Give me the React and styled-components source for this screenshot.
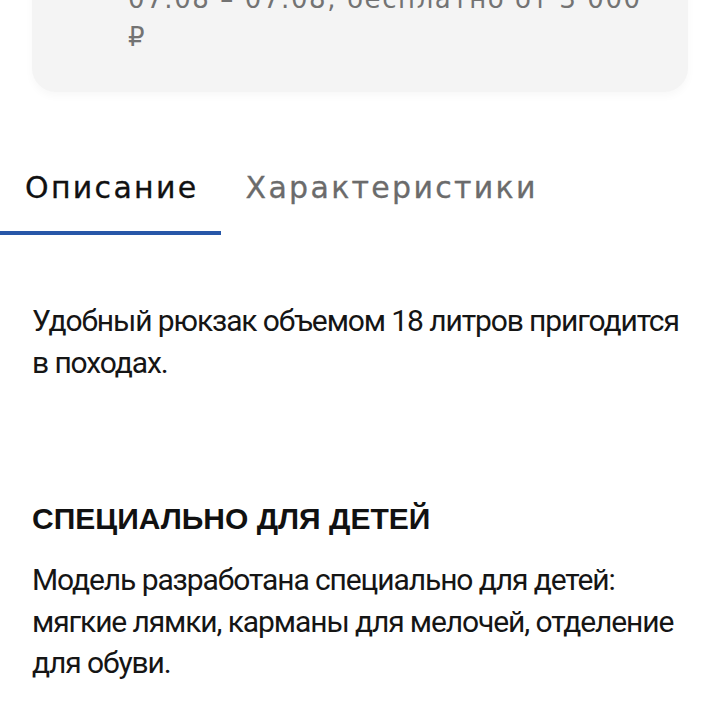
import React, { useState } from "react";
import styled, { createGlobalStyle } from "styled-components";

const GlobalStyle = createGlobalStyle`
  html, body {
    margin: 0;
    padding: 0;
    background: #ffffff;
  }
  body {
    font-family: Roboto, "Noto Sans", sans-serif;
    color: #111111;
  }
`;

const Page = styled.div`
  width: 720px;
  height: 720px;
  overflow: hidden;
  background: #ffffff;
`;

const DeliveryCard = styled.div`
  margin: -60px 32px 0;
  padding: 40px 40px 36px 96px;
  background: #f4f4f4;
  border-radius: 24px;
  box-shadow: 0 4px 8px rgba(0, 0, 0, 0.03);
`;

const DeliveryText = styled.p`
  margin: 0;
  font-family: "DejaVu Sans", sans-serif;
  font-size: 26px;
  line-height: 38px;
  letter-spacing: 1.6px;
  color: #737373;
`;

const TabBar = styled.div`
  display: flex;
  margin-top: 56px;
`;

const Tab = styled.button`
  border: 0;
  background: none;
  margin: 0;
  padding: 20px 22px 23px 25px;
  font-family: "DejaVu Sans", sans-serif;
  font-size: 30px;
  line-height: 40px;
  letter-spacing: 2.3px;
  font-weight: 400;
  -webkit-text-stroke: 0.3px currentColor;
  color: ${p => (p.$active ? "#111111" : "#6b6b6b")};
  border-bottom: 4px solid ${p => (p.$active ? "#2757a8" : "transparent")};
  cursor: pointer;
`;

const Content = styled.div`
  padding: 0 32px;
`;

const Paragraph = styled.p`
  margin: ${p => p.$top || "0"} 0 0;
  font-family: Roboto, sans-serif;
  font-size: 30px;
  line-height: 41.5px;
  letter-spacing: -1.1px;
  color: #151515;
`;

const Heading = styled.h3`
  margin: 120px 0 0;
  font-family: "Liberation Sans", Arial, sans-serif;
  font-size: 30px;
  font-weight: 700;
  line-height: 32px;
  color: #111111;
`;

const tabs = ["Описание", "Характеристики"];

export default function App() {
  const [active, setActive] = useState(0);

  return (
    <Page>
      <GlobalStyle />
      <DeliveryCard>
        <DeliveryText>07.08 – 07.08, бесплатно от 3 000 ₽</DeliveryText>
      </DeliveryCard>
      <TabBar>
        {tabs.map((t, i) => (
          <Tab key={t} $active={i === active} onClick={() => setActive(i)}>
            {t}
          </Tab>
        ))}
      </TabBar>
      <Content>
        <Paragraph $top="65px">
          Удобный рюкзак объемом 18 литров пригодится в походах.
        </Paragraph>
        <Heading>СПЕЦИАЛЬНО ДЛЯ ДЕТЕЙ</Heading>
        <Paragraph $top="24px">
          Модель разработана специально для детей: мягкие лямки, карманы для
          мелочей, отделение для обуви.
        </Paragraph>
      </Content>
    </Page>
  );
}
